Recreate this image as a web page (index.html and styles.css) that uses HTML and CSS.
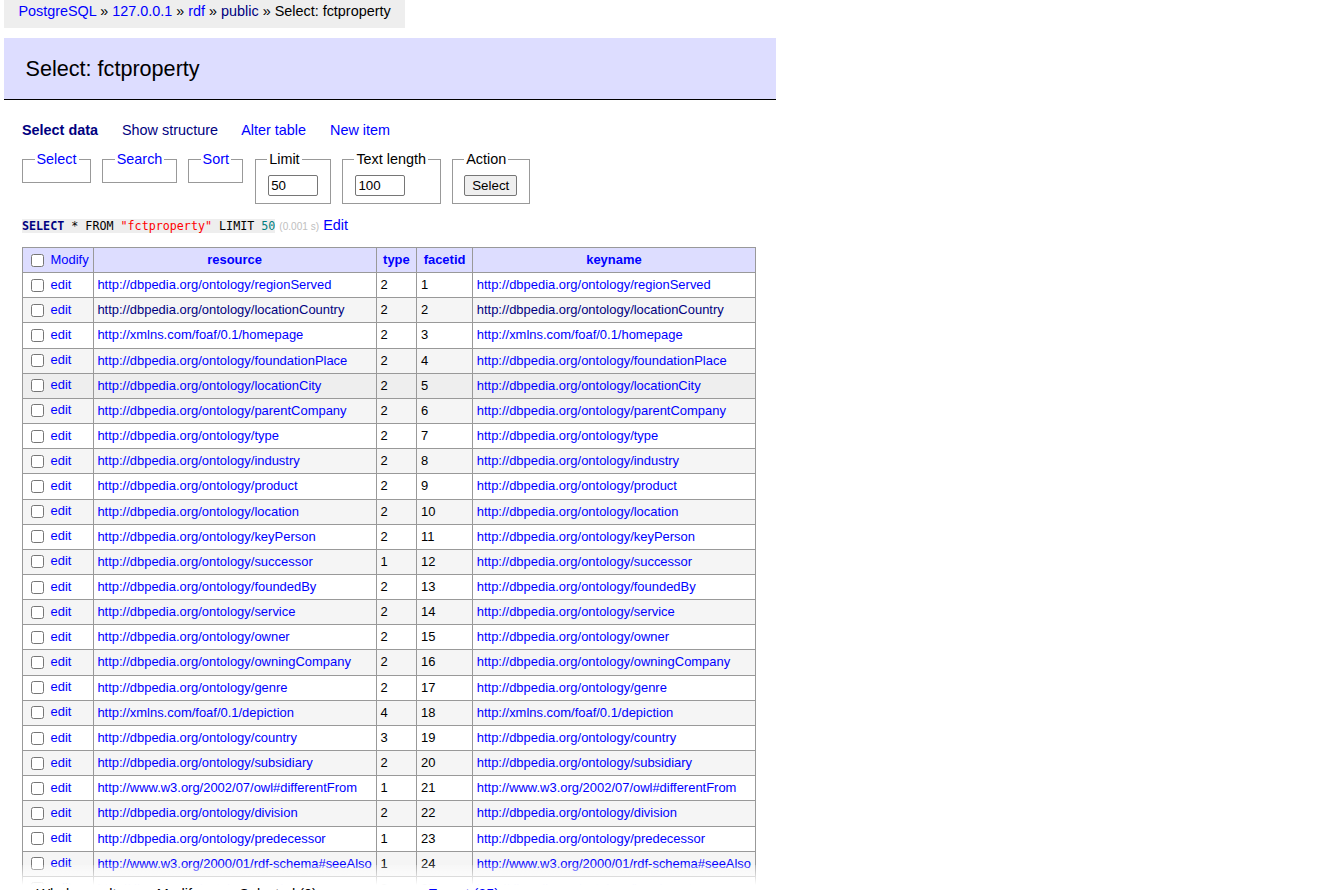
FILE: index.html
```html
<!DOCTYPE html>
<html lang="en">
<head>
<meta charset="utf-8">
<title>Select: fctproperty - Adminer</title>
<link rel="stylesheet" href="styles.css">
</head>
<body>
<div class="breadcrumb"><a href="#">PostgreSQL</a> » <a href="#">127.0.0.1</a> » <a href="#">rdf</a> » <a href="#" class="v">public</a> » Select: fctproperty</div>
<div class="content">
<h2>Select: fctproperty</h2>
<p class="links"><a href="#" class="v active">Select data</a> <a href="#" class="v">Show structure</a> <a href="#">Alter table</a> <a href="#">New item</a></p>
<form class="filters">
<fieldset><legend><a href="#">Select</a></legend></fieldset>
<fieldset><legend><a href="#">Search</a></legend></fieldset>
<fieldset><legend><a href="#">Sort</a></legend></fieldset>
<fieldset><legend>Limit</legend><div><input type="text" class="size" value="50"></div></fieldset>
<fieldset><legend>Text length</legend><div><input type="text" class="size" value="100"></div></fieldset>
<fieldset><legend>Action</legend><div><input type="submit" class="btn" value="Select"></div></fieldset>
</form>
<p class="query"><code class="sql"><a href="#" class="kw">SELECT</a> * FROM <span class="str">"fctproperty"</span> LIMIT <span class="num">50</span></code> <span class="time">(0.001 s)</span> <a href="#">Edit</a></p>
<form class="results">
<table class="odds nowrap">
<thead>
<tr><td><input type="checkbox"> <a href="#">Modify</a></td><th><a href="#">resource</a></th><th><a href="#">type</a></th><th><a href="#">facetid</a></th><th><a href="#">keyname</a></th></tr>
</thead>
<tbody>
<tr><td><input type="checkbox"> <a href="#">edit</a></td><td><a href="#">http://dbpedia.org/ontology/regionServed</a></td><td>2</td><td>1</td><td><a href="#">http://dbpedia.org/ontology/regionServed</a></td></tr>
<tr><td><input type="checkbox"> <a href="#">edit</a></td><td><a href="#" class="v">http://dbpedia.org/ontology/locationCountry</a></td><td>2</td><td>2</td><td><a href="#" class="v">http://dbpedia.org/ontology/locationCountry</a></td></tr>
<tr><td><input type="checkbox"> <a href="#">edit</a></td><td><a href="#">http://xmlns.com/foaf/0.1/homepage</a></td><td>2</td><td>3</td><td><a href="#">http://xmlns.com/foaf/0.1/homepage</a></td></tr>
<tr><td><input type="checkbox"> <a href="#">edit</a></td><td><a href="#">http://dbpedia.org/ontology/foundationPlace</a></td><td>2</td><td>4</td><td><a href="#">http://dbpedia.org/ontology/foundationPlace</a></td></tr>
<tr class="hover"><td><input type="checkbox"> <a href="#">edit</a></td><td><a href="#">http://dbpedia.org/ontology/locationCity</a></td><td>2</td><td>5</td><td><a href="#">http://dbpedia.org/ontology/locationCity</a></td></tr>
<tr><td><input type="checkbox"> <a href="#">edit</a></td><td><a href="#">http://dbpedia.org/ontology/parentCompany</a></td><td>2</td><td>6</td><td><a href="#">http://dbpedia.org/ontology/parentCompany</a></td></tr>
<tr><td><input type="checkbox"> <a href="#">edit</a></td><td><a href="#">http://dbpedia.org/ontology/type</a></td><td>2</td><td>7</td><td><a href="#">http://dbpedia.org/ontology/type</a></td></tr>
<tr><td><input type="checkbox"> <a href="#">edit</a></td><td><a href="#">http://dbpedia.org/ontology/industry</a></td><td>2</td><td>8</td><td><a href="#">http://dbpedia.org/ontology/industry</a></td></tr>
<tr><td><input type="checkbox"> <a href="#">edit</a></td><td><a href="#">http://dbpedia.org/ontology/product</a></td><td>2</td><td>9</td><td><a href="#">http://dbpedia.org/ontology/product</a></td></tr>
<tr><td><input type="checkbox"> <a href="#">edit</a></td><td><a href="#">http://dbpedia.org/ontology/location</a></td><td>2</td><td>10</td><td><a href="#">http://dbpedia.org/ontology/location</a></td></tr>
<tr><td><input type="checkbox"> <a href="#">edit</a></td><td><a href="#">http://dbpedia.org/ontology/keyPerson</a></td><td>2</td><td>11</td><td><a href="#">http://dbpedia.org/ontology/keyPerson</a></td></tr>
<tr><td><input type="checkbox"> <a href="#">edit</a></td><td><a href="#">http://dbpedia.org/ontology/successor</a></td><td>1</td><td>12</td><td><a href="#">http://dbpedia.org/ontology/successor</a></td></tr>
<tr><td><input type="checkbox"> <a href="#">edit</a></td><td><a href="#">http://dbpedia.org/ontology/foundedBy</a></td><td>2</td><td>13</td><td><a href="#">http://dbpedia.org/ontology/foundedBy</a></td></tr>
<tr><td><input type="checkbox"> <a href="#">edit</a></td><td><a href="#">http://dbpedia.org/ontology/service</a></td><td>2</td><td>14</td><td><a href="#">http://dbpedia.org/ontology/service</a></td></tr>
<tr><td><input type="checkbox"> <a href="#">edit</a></td><td><a href="#">http://dbpedia.org/ontology/owner</a></td><td>2</td><td>15</td><td><a href="#">http://dbpedia.org/ontology/owner</a></td></tr>
<tr><td><input type="checkbox"> <a href="#">edit</a></td><td><a href="#">http://dbpedia.org/ontology/owningCompany</a></td><td>2</td><td>16</td><td><a href="#">http://dbpedia.org/ontology/owningCompany</a></td></tr>
<tr><td><input type="checkbox"> <a href="#">edit</a></td><td><a href="#">http://dbpedia.org/ontology/genre</a></td><td>2</td><td>17</td><td><a href="#">http://dbpedia.org/ontology/genre</a></td></tr>
<tr><td><input type="checkbox"> <a href="#">edit</a></td><td><a href="#">http://xmlns.com/foaf/0.1/depiction</a></td><td>4</td><td>18</td><td><a href="#">http://xmlns.com/foaf/0.1/depiction</a></td></tr>
<tr><td><input type="checkbox"> <a href="#">edit</a></td><td><a href="#">http://dbpedia.org/ontology/country</a></td><td>3</td><td>19</td><td><a href="#">http://dbpedia.org/ontology/country</a></td></tr>
<tr><td><input type="checkbox"> <a href="#">edit</a></td><td><a href="#">http://dbpedia.org/ontology/subsidiary</a></td><td>2</td><td>20</td><td><a href="#">http://dbpedia.org/ontology/subsidiary</a></td></tr>
<tr><td><input type="checkbox"> <a href="#">edit</a></td><td><a href="#">http://www.w3.org/2002/07/owl#differentFrom</a></td><td>1</td><td>21</td><td><a href="#">http://www.w3.org/2002/07/owl#differentFrom</a></td></tr>
<tr><td><input type="checkbox"> <a href="#">edit</a></td><td><a href="#">http://dbpedia.org/ontology/division</a></td><td>2</td><td>22</td><td><a href="#">http://dbpedia.org/ontology/division</a></td></tr>
<tr><td><input type="checkbox"> <a href="#">edit</a></td><td><a href="#">http://dbpedia.org/ontology/predecessor</a></td><td>1</td><td>23</td><td><a href="#">http://dbpedia.org/ontology/predecessor</a></td></tr>
<tr><td><input type="checkbox"> <a href="#">edit</a></td><td><a href="#">http://www.w3.org/2000/01/rdf-schema#seeAlso</a></td><td>1</td><td>24</td><td><a href="#">http://www.w3.org/2000/01/rdf-schema#seeAlso</a></td></tr>
<tr><td><input type="checkbox"> <a href="#">edit</a></td><td><a href="#">http://dbpedia.org/ontology/headquarter</a></td><td>2</td><td>25</td><td><a href="#">http://dbpedia.org/ontology/headquarter</a></td></tr>
</tbody>
</table>
<div class="footer"><div>
<fieldset><legend>Whole result</legend><label><input type="checkbox">25 rows</label></fieldset>
<fieldset><legend>Modify</legend><div><input type="submit" class="btn" value="Save"></div></fieldset>
<fieldset><legend>Selected (0)</legend><div><input type="submit" class="btn" value="Edit"> <input type="submit" class="btn" value="Clone"> <input type="submit" class="btn" value="Delete"></div></fieldset>
<fieldset><legend><a href="#">Export (25)</a></legend></fieldset>
</div></div>
</form>
</div>
</body>
</html>
```
FILE: styles.css
```css
html {
  background: #fff;
}
body {
  margin: 0;
  color: #000;
  background: #fff;
  font: 14.4px/1.25 "Liberation Sans", Arial, sans-serif;
  width: fit-content;
}
a {
  color: blue;
  text-decoration: none;
}
a.v {
  color: navy;
}
.breadcrumb {
  width: fit-content;
  margin-left: 4px;
  padding: 0 14.4px;
  height: 28px;
  line-height: 23.5px;
  background: #eee;
  white-space: nowrap;
}
.content {
  margin-left: 22px;
  padding: 10px 20px 20px 0;
}
h2 {
  font-size: 21.6px;
  line-height: 27px;
  font-weight: normal;
  color: #000;
  margin: 0 0 20.5px -18px;
  padding: 16.8px 21.6px 17.3px;
  border-bottom: 1px solid #000;
  background: #ddf;
}
p {
  margin: 11.52px 20px 0 0;
}
.links a {
  margin-right: 20px;
  white-space: nowrap;
}
.active {
  font-weight: bold;
}
form {
  margin: 0;
}
fieldset {
  display: inline-block;
  vertical-align: top;
  padding: 7.2px 11.52px;
  margin: 11.52px 7.2px 0 0;
  border: 1px solid #999;
  min-width: 0;
}
legend {
  padding: 0 2px;
}
input {
  vertical-align: middle;
}
input.size {
  box-sizing: border-box;
  width: 50px;
  height: 21px;
  font: 13.33px "Liberation Sans", Arial, sans-serif;
  padding: 1px 2px;
  border: 1px solid #767676;
  border-radius: 2px;
  margin: 0 0 0 1px;
}
.btn {
  font: 13.33px "Liberation Sans", Arial, sans-serif;
  height: 21px;
  padding: 1px 7px;
  margin: 0;
  color: #000;
  background: #efefef;
  border: 1px solid #767676;
  border-radius: 2px;
}
.query {
  white-space: nowrap;
}
code.sql {
  font: 11.7px/1.25 "DejaVu Sans Mono", monospace;
  background: #eee;
}
code.sql .kw {
  color: navy;
  font-weight: bold;
}
code.sql .str {
  color: red;
}
code.sql .num {
  color: #007f7f;
}
.time {
  color: silver;
  font-size: 10.08px;
}
table {
  margin: 12.96px 20px 0 0;
  border-collapse: collapse;
  font-size: 12.96px;
}
td, th {
  border: 1px solid #999;
  padding: 2.59px 3.89px;
}
th {
  text-align: left;
}
thead th {
  text-align: center;
  padding: 2.59px 6.48px;
}
thead td, thead th {
  background: #ddf;
}
.nowrap td, .nowrap th {
  white-space: pre;
}
.odds tbody tr:nth-child(2n) {
  background: #f5f5f5;
}
tbody tr.hover td {
  background: #eee;
}
.footer {
  position: relative;
  margin: -37.5px -20px 0 0;
  padding-top: 20px;
  background: linear-gradient(rgba(255, 255, 255, 0.2), #fff 20px);
}
.footer > div {
  background: #fff;
  padding: 0 0 7.2px;
}
.footer fieldset {
  margin-top: 0;
}
```
